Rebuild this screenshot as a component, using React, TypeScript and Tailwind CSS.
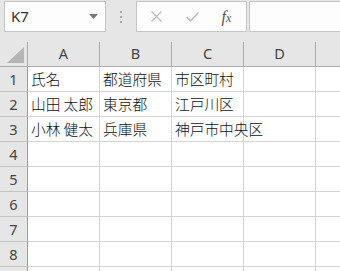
import React from "react";

const cols = ["A", "B", "C", "D"];
const data: string[][] = [
  ["氏名", "都道府県", "市区町村", ""],
  ["山田 太郎", "東京都", "江戸川区", ""],
  ["小林 健太", "兵庫県", "神戸市中央区", ""],
  ["", "", "", ""],
  ["", "", "", ""],
  ["", "", "", ""],
  ["", "", "", ""],
  ["", "", "", ""],
  ["", "", "", ""],
];

export default function App() {
  return (
    <div
      className="w-[340px] h-[271px] overflow-hidden bg-[#e6e6e6] flex flex-col"
      style={{ fontFamily: '"Noto Sans", "Noto Sans CJK JP", sans-serif' }}
    >
      {/* toolbar */}
      <div className="h-[35px] shrink-0 flex items-start pt-[1px]">
        <div className="ml-[4px] w-[102px] h-[31px] bg-[#fdfdfd] border border-[#c6c6c6] flex items-center justify-between pl-[6px] pr-[6px]">
          <span className="text-[15px] text-[#333] leading-none">K7</span>
          <svg width="9" height="5" viewBox="0 0 9 5" className="mr-[1px]">
            <path d="M0 0 L9 0 L4.5 5 Z" fill="#777" />
          </svg>
        </div>
        <div className="w-[30px] h-[31px] flex flex-col items-center justify-center gap-[3px]">
          <div className="w-[2px] h-[2px] bg-[#a8a8a8]" />
          <div className="w-[2px] h-[2px] bg-[#a8a8a8]" />
          <div className="w-[2px] h-[2px] bg-[#a8a8a8]" />
        </div>
        <div className="w-[111px] h-[31px] bg-[#fdfdfd] border border-[#c6c6c6] flex items-center">
          <div className="w-[38px] flex justify-center">
            <svg width="11" height="11" viewBox="0 0 11 11">
              <path d="M0.5 0.5 L10.5 10.5 M10.5 0.5 L0.5 10.5" stroke="#bdbdbd" strokeWidth="1.3" />
            </svg>
          </div>
          <div className="w-[34px] flex justify-center">
            <svg width="13" height="10" viewBox="0 0 13 10">
              <path d="M0.8 5 L4.5 8.8 L12.3 0.8" stroke="#bdbdbd" strokeWidth="1.6" fill="none" />
            </svg>
          </div>
          <div className="flex-1 flex justify-center pr-[2px]">
            <span
              className="text-[16px] text-[#555] italic leading-none"
              style={{ fontFamily: '"Liberation Serif", serif' }}
            >
              f<span className="text-[12px]">x</span>
            </span>
          </div>
        </div>
        <div className="ml-[2px] flex-1 h-[31px] bg-[#fdfdfd] border border-[#c6c6c6] border-r-0" />
      </div>

      {/* column header */}
      <div className="h-[32px] shrink-0 flex border-b border-[#ababab]">
        <div className="w-[28px] shrink-0 relative flex flex-col">
          <div className="h-[7px]" />
          <div className="flex-1 border-r border-[#ababab] relative">
            <svg width="17" height="16" viewBox="0 0 17 16" className="absolute left-[7px] top-[5px]">
              <path d="M17 0 L17 16 L0 16 Z" fill="#b5b5b5" />
            </svg>
          </div>
        </div>
        {cols.map((c) => (
          <div key={c} className="w-[72px] shrink-0 flex flex-col">
            <div className="h-[7px]" />
            <div className="flex-1 border-r border-[#ababab] flex items-center justify-center pb-[1px]">
              <span className="text-[14.5px] text-[#444] leading-none">{c}</span>
            </div>
          </div>
        ))}
        <div className="flex-1" />
      </div>

      {/* rows */}
      <div className="flex flex-col bg-white">
        {data.map((row, i) => (
          <div key={i} className="h-[25px] shrink-0 flex">
            <div className="w-[28px] shrink-0 bg-[#e6e6e6] border-r border-r-[#9e9e9e] border-b border-b-[#c4c4c4] flex items-center justify-center">
              {i < 8 && <span className="text-[14.5px] text-[#444] leading-none">{i + 1}</span>}
            </div>
            {row.map((cell, j) => (
              <div
                key={j}
                className="w-[72px] shrink-0 border-r border-b border-[#d4d4d4] flex items-center pl-[3px] overflow-visible whitespace-nowrap"
              >
                <span
                  className="text-[14.7px] font-light text-[#111] leading-none relative z-10"
                  style={{ fontFamily: '"Noto Sans CJK JP", sans-serif' }}
                >
                  {cell}
                </span>
              </div>
            ))}
            <div className="flex-1 border-b border-[#d4d4d4]" />
          </div>
        ))}
      </div>
    </div>
  );
}
